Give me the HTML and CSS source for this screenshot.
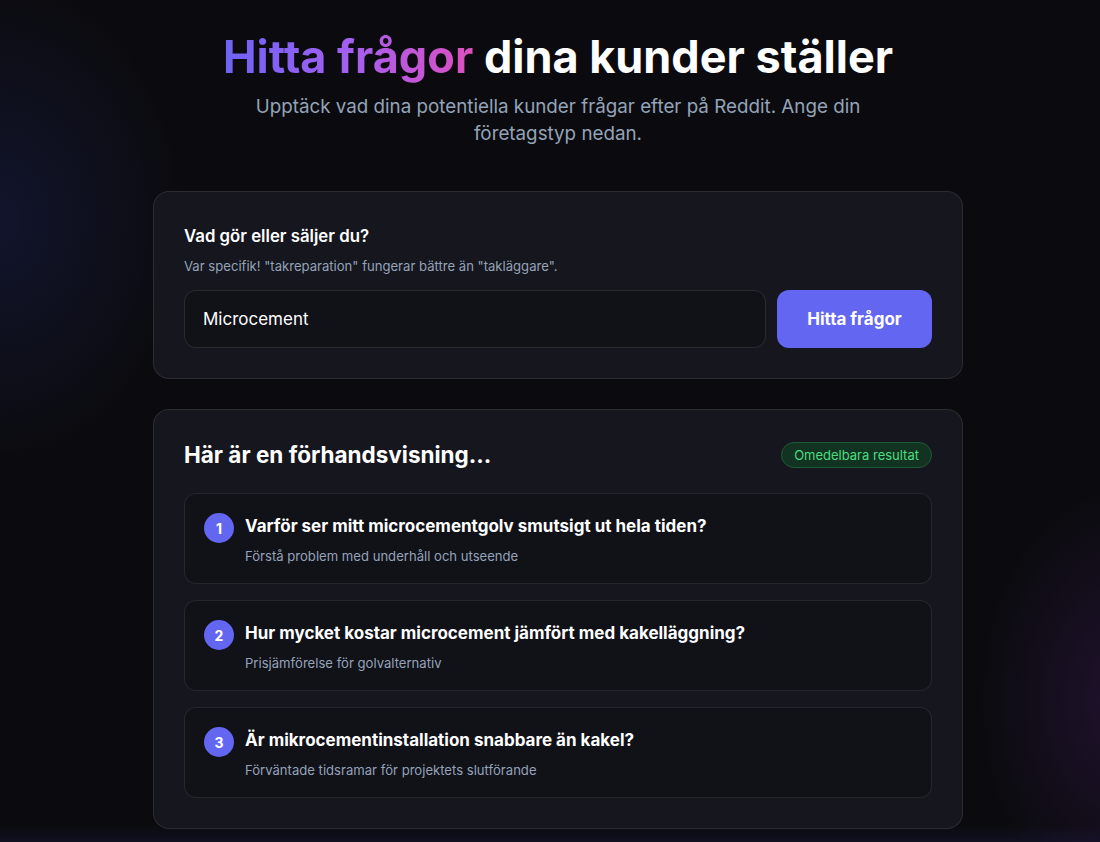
FILE: index.html
```html
<!DOCTYPE html>
<html lang="sv">
<head>
    <meta charset="UTF-8">
    <meta name="viewport" content="width=device-width, initial-scale=1.0">
    <title>Hitta frågor dina kunder ställer</title>
    <link rel="stylesheet" href="styles.css">
</head>
<body>
    <main id="page">
        <header class="hero">
            <h1 class="hero-title"><span class="gradient-text">Hitta frågor</span> dina kunder ställer</h1>
            <p class="hero-sub">Upptäck vad dina potentiella kunder frågar efter på Reddit. Ange din företagstyp nedan.</p>
        </header>

        <section class="card search-card">
            <label class="field-label" for="business-input">Vad gör eller säljer du?</label>
            <p class="field-hint">Var specifik! "takreparation" fungerar bättre än "takläggare".</p>
            <div class="search-row">
                <input id="business-input" class="search-input" type="text" value="Microcement">
                <button class="search-button">Hitta frågor</button>
            </div>
        </section>

        <section class="card preview-card">
            <div class="preview-head">
                <h2 class="preview-title">Här är en förhandsvisning...</h2>
                <span class="badge">Omedelbara resultat</span>
            </div>
            <ul class="question-list">
                <li class="question">
                    <span class="question-num">1</span>
                    <div class="question-body">
                        <h3 class="question-title">Varför ser mitt microcementgolv smutsigt ut hela tiden?</h3>
                        <p class="question-sub">Förstå problem med underhåll och utseende</p>
                    </div>
                </li>
                <li class="question">
                    <span class="question-num">2</span>
                    <div class="question-body">
                        <h3 class="question-title">Hur mycket kostar microcement jämfört med kakelläggning?</h3>
                        <p class="question-sub">Prisjämförelse för golvalternativ</p>
                    </div>
                </li>
                <li class="question">
                    <span class="question-num">3</span>
                    <div class="question-body">
                        <h3 class="question-title">Är mikrocementinstallation snabbare än kakel?</h3>
                        <p class="question-sub">Förväntade tidsramar för projektets slutförande</p>
                    </div>
                </li>
            </ul>
        </section>
    </main>
</body>
</html>
```

FILE: styles.css
```css
* {
    box-sizing: border-box;
}

html, body {
    margin: 0;
    padding: 0;
}

body {
    min-height: 842px;
    font-family: Inter, "Noto Sans", sans-serif;
    color: #fff;
    background-color: #0b0b0f;
    background-image:
        radial-gradient(ellipse 260px 340px at 0px 220px, rgba(30, 40, 100, 0.35), transparent 70%),
        radial-gradient(ellipse 200px 300px at 1120px 700px, rgba(70, 30, 100, 0.35), transparent 70%),
        linear-gradient(to bottom, transparent 825px, rgba(25, 25, 60, 0.4) 842px);
    overflow: hidden;
}

#page {
    max-width: 826px;
    margin: 0 auto;
    padding: 0 0 0 16px;
}

.hero {
    text-align: center;
    padding-top: 28px;
}

.hero-title {
    margin: 0;
    font-size: 45px;
    line-height: 58px;
    font-weight: 700;
}

.gradient-text {
    background: linear-gradient(90deg, #6c63f4 0%, #a35ff0 50%, #dd4fc0 100%);
    -webkit-background-clip: text;
    background-clip: text;
    color: transparent;
}

.hero-sub {
    max-width: 672px;
    margin: 7px auto 0;
    font-size: 18.8px;
    line-height: 27px;
    color: #94a3b8;
}

.card {
    background: #16161e;
    border: 1px solid rgba(255, 255, 255, 0.09);
    border-radius: 16px;
    padding: 30px;
}

.search-card {
    margin-top: 44px;
}

.field-label {
    display: block;
    font-size: 16.8px;
    line-height: 28px;
    font-weight: 600;
}

.field-hint {
    margin: 6px 0 0;
    font-size: 13.1px;
    line-height: 20px;
    color: #94a3b8;
}

.search-row {
    display: flex;
    gap: 11px;
    margin-top: 14px;
}

.search-input {
    flex: 1;
    height: 58px;
    padding: 0 18px;
    background: #111118;
    border: 1px solid rgba(255, 255, 255, 0.1);
    border-radius: 12px;
    font-family: inherit;
    font-size: 17px;
    color: #fff;
    outline: none;
}

.search-button {
    width: 155px;
    height: 58px;
    border: none;
    border-radius: 12px;
    background: #6366f1;
    font-family: inherit;
    font-size: 17px;
    font-weight: 700;
    color: #fff;
    cursor: pointer;
}

.preview-card {
    margin-top: 30px;
}

.preview-head {
    display: flex;
    justify-content: space-between;
    align-items: center;
}

.preview-title {
    margin: 0;
    font-size: 22.5px;
    line-height: 30px;
    font-weight: 700;
}

.badge {
    padding: 0 12px;
    height: 26px;
    line-height: 24px;
    border-radius: 999px;
    background: #133322;
    border: 1px solid #1d5a36;
    color: #4ade80;
    font-size: 13px;
}

.question-list {
    list-style: none;
    margin: 23px 0 0;
    padding: 0;
    display: flex;
    flex-direction: column;
    gap: 16px;
}

.question {
    display: flex;
    gap: 11px;
    padding: 19px 19px 17px;
    background: #111118;
    border: 1px solid rgba(255, 255, 255, 0.09);
    border-radius: 12px;
}

.question-num {
    flex: none;
    width: 30px;
    height: 30px;
    border-radius: 50%;
    background: #6366f1;
    display: flex;
    align-items: center;
    justify-content: center;
    font-size: 14px;
    font-weight: 700;
}

.question-title {
    margin: 0;
    font-size: 17px;
    line-height: 26px;
    font-weight: 700;
}

.question-sub {
    margin: 7px 0 0;
    font-size: 13.1px;
    line-height: 20px;
    color: #94a3b8;
}
```
